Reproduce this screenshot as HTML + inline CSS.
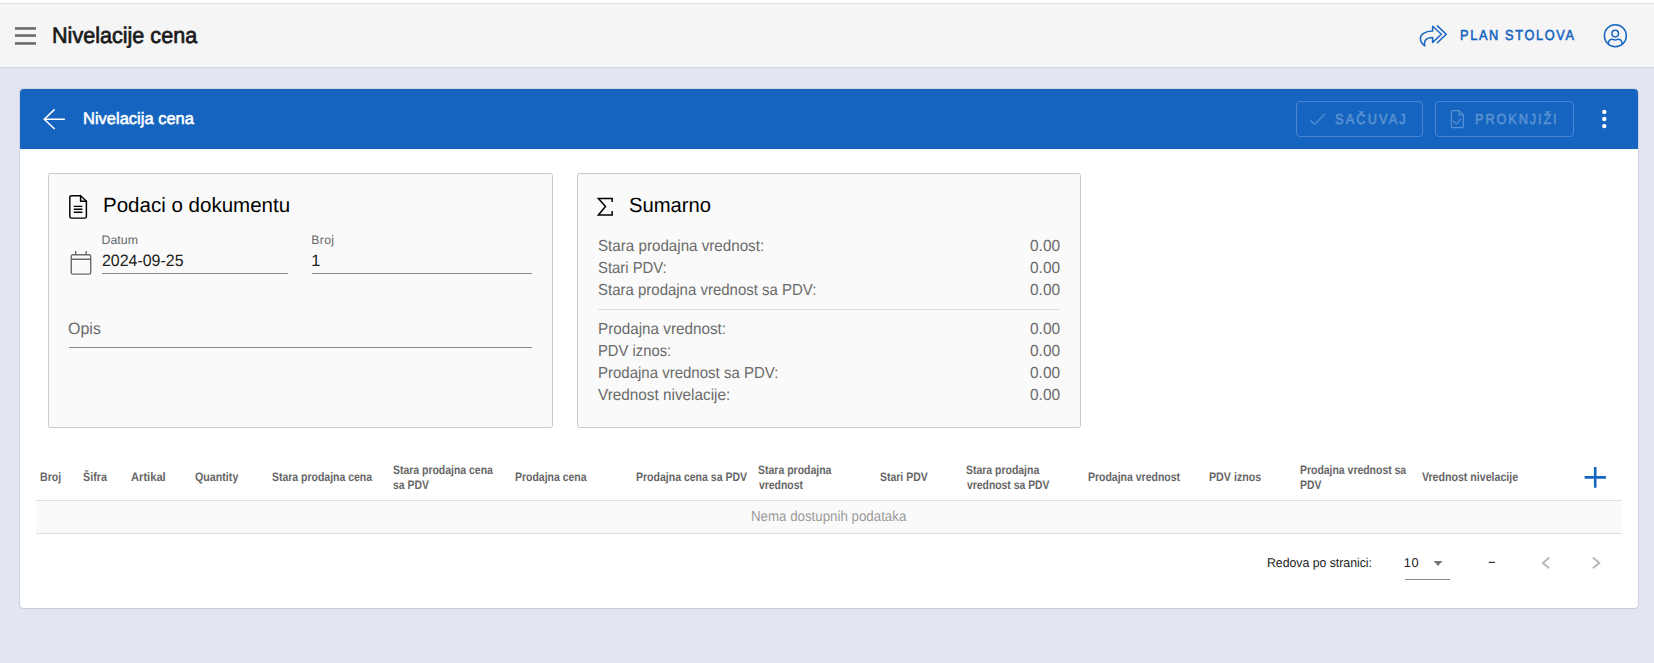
<!DOCTYPE html>
<html><head><meta charset="utf-8">
<style>
html,body{margin:0;padding:0;}
body{width:1654px;height:663px;overflow:hidden;background:#e3e6f0;position:relative;font-family:"Liberation Sans",sans-serif;}
.t{position:absolute;white-space:pre;text-rendering:geometricPrecision;transform-origin:0 0;font-family:"Liberation Sans",sans-serif;}
.abs{position:absolute;}
#top{left:0;top:0;width:1654px;height:3px;background:#fff;}
#topline{left:0;top:3px;width:1654px;height:1px;background:#e0e2e0;}
#bar{left:0;top:4px;width:1654px;height:63px;background:#f5f5f5;}
#barline{left:0;top:67px;width:1654px;height:1px;background:#d4d7e4;box-shadow:0 1px 0 #dfe2ec;}
#card{left:20px;top:89px;width:1618px;height:519px;background:#fff;border-radius:4px;box-shadow:0 0 1px 0.5px rgba(90,100,150,.14), 0 1px 1px rgba(90,100,150,.08);}
#hdr{left:20px;top:89px;width:1618px;height:60px;background:#1565c0;border-radius:4px 4px 0 0;}
.ic{left:48px;top:173px;box-sizing:border-box;height:255px;background:#fafafa;border:1px solid #c9c9c9;border-radius:2.5px;}
.btn{box-sizing:border-box;top:101px;height:36px;border:1px solid #4a86cf;border-radius:4px;}
.ul{height:1px;background:#8a8a8a;}
</style></head><body>
<div class="abs" id="top"></div><div class="abs" id="topline"></div>
<div class="abs" id="bar"></div><div class="abs" id="barline"></div>
<div class="abs" id="card"></div>
<div class="abs" id="hdr"></div>
<!-- buttons -->
<div class="abs btn" style="left:1296px;width:127px;"></div>
<div class="abs btn" style="left:1435px;width:139px;"></div>
<!-- inner cards -->
<div class="abs ic" style="left:48px;width:505px;"></div>
<div class="abs ic" style="left:577px;width:504px;"></div>
<!-- underlines -->
<div class="abs ul" style="left:102px;top:273px;width:186px;"></div>
<div class="abs ul" style="left:312px;top:273px;width:220px;"></div>
<div class="abs ul" style="left:69px;top:347px;width:463px;"></div>
<div class="abs" style="left:598px;top:309px;width:462px;height:1px;background:#dcdcdc;"></div>
<!-- table -->
<div class="abs" style="left:36px;top:500px;width:1586px;height:1px;background:#dedede;"></div>
<div class="abs" style="left:36px;top:501px;width:1586px;height:32px;background:#fafafa;"></div>
<div class="abs" style="left:36px;top:533px;width:1586px;height:1px;background:#dedede;"></div>
<div class="abs ul" style="left:1405px;top:579px;width:45px;"></div>
<svg class="abs" style="left:0;top:0;" width="1654" height="663" viewBox="0 0 1654 663" fill="none" stroke-linecap="round" stroke-linejoin="round">
<!-- hamburger -->
<g fill="#666" stroke="none"><rect x="15" y="27.2" width="21" height="2.5"/><rect x="15" y="34.3" width="21" height="2.5"/><rect x="15" y="42.2" width="21" height="2.5"/></g>
<!-- share-all -->
<g stroke="#1565c0" stroke-width="1.5" stroke-linejoin="miter">
<path d="M1441.4 34.3 L1432.6 26.2 L1432.6 31 C1424.5 31.2 1420.4 34.6 1420.4 38.2 C1420.4 41.4 1422.3 44 1424.8 45.8 C1423.6 41.2 1425.6 37.6 1432.6 37.6 L1432.6 42.4 Z" stroke-linejoin="round"/>
<path d="M1437.4 25.9 L1446.2 34.3 L1437.4 42.7"/>
</g>
<!-- user -->
<g stroke="#1565c0" stroke-width="1.5">
<circle cx="1615.35" cy="35.8" r="11"/>
<circle cx="1615.2" cy="33.6" r="3.3"/>
<path d="M1608.2 43.6 C1608.6 41.2 1610 39.3 1612 39.3 C1613.2 39.3 1613.8 40 1615.2 40 C1616.6 40 1617.2 39.3 1618.4 39.3 C1620.4 39.3 1621.8 41.2 1622.2 43.6"/>
</g>
<!-- arrow left -->
<path d="M64.9 119.2 H44.3 M54.6 109.35 L44.3 119.2 L54.6 129" stroke="#fff" stroke-width="1.5" stroke-linecap="butt" stroke-linejoin="miter"/>
<!-- check -->
<path d="M1310.3 120.2 L1314.5 124.4 L1325.3 113.6" stroke="#5b93d3" stroke-width="1.15" stroke-linecap="butt" stroke-linejoin="miter"/>
<!-- file check -->
<g stroke="#5b93d3" stroke-width="1.15">
<path d="M1459 110.6 H1452.6 Q1451.4 110.6 1451.4 111.8 V126.4 Q1451.4 127.6 1452.6 127.6 H1462.2 Q1463.4 127.6 1463.4 126.4 V114.9 Z"/>
<path d="M1459 110.6 V115 H1463.4"/>
<path d="M1453.4 121.2 L1456.3 123.8 L1461 119.2"/>
</g>
<!-- dots -->
<g fill="#fff" stroke="none"><circle cx="1604.3" cy="111.9" r="2.2"/><circle cx="1604.3" cy="119" r="2.2"/><circle cx="1604.3" cy="126.1" r="2.2"/></g>
<!-- file doc -->
<g stroke="#000" stroke-width="1.45">
<path d="M80.6 195.75 H71.4 Q69.8 195.75 69.8 197.35 V216.5 Q69.8 218.1 71.4 218.1 H84.8 Q86.4 218.1 86.4 216.5 V201.2 Z"/>
<path d="M80.6 195.75 V201.2 H86.4"/>
<path d="M73.8 206.3 H82.4 M73.8 209.25 H82.4 M73.8 212.2 H82.4" stroke-width="1.35" stroke-linecap="butt"/>
</g>
<!-- calendar -->
<g stroke="#6a6a6a" stroke-width="1.4">
<rect x="71.26" y="254.8" width="19.44" height="19.3" rx="1.6"/>
<path d="M71.26 259.2 H90.7 M75.66 251.1 V254.8 M86.2 251.1 V254.8" stroke-linecap="butt"/>
</g>
<!-- sigma -->
<path d="M612.15 202.1 V198.6 H598.4 L605.5 206.6 L598.4 214.9 H612.15 V211.1" stroke="#000" stroke-width="1.5" stroke-linecap="butt" stroke-linejoin="miter"/>
<!-- plus -->
<path d="M1584.65 477.4 H1605.9 M1595.2 467.1 V487.8" stroke="#1565c0" stroke-width="2.6" stroke-linecap="butt"/>
<!-- dropdown -->
<path d="M1433.6 561 H1442.5 L1438.05 565.9 Z" fill="#757575" stroke="none"/>
<rect x="1488.7" y="561.8" width="6.4" height="1.1" fill="#222" stroke="none"/>
<!-- chevrons -->
<g stroke="#b8b8b8" stroke-width="2" stroke-linecap="butt" stroke-linejoin="miter">
<path d="M1549.3 557.6 L1542.9 563 L1549.3 568.3"/>
<path d="M1592.9 557.6 L1599.3 563 L1592.9 568.3"/>
</g>
</svg>

<span class="t" style="left:51.78px;top:18.65px;font-size:22.5px;line-height:34px;font-weight:400;color:#1a1a1a;transform:scaleX(0.9592);-webkit-text-stroke:0.7px currentColor;">Nivelacije cena</span>
<span class="t" style="left:1459.67px;top:25.46px;font-size:14.5px;line-height:22px;font-weight:400;color:#1565c0;letter-spacing:1.865px;transform:scaleX(0.8800);-webkit-text-stroke:0.55px currentColor;">PLAN STOLOVA</span>
<span class="t" style="left:83.47px;top:106.76px;font-size:16.5px;line-height:25px;font-weight:400;color:#ffffff;transform:scaleX(0.9995);-webkit-text-stroke:0.55px currentColor;">Nivelacija cena</span>
<span class="t" style="left:1335.47px;top:108.76px;font-size:14.5px;line-height:22px;font-weight:400;color:#5a92d2;letter-spacing:2.422px;transform:scaleX(0.8800);-webkit-text-stroke:0.55px currentColor;">SAČUVAJ</span>
<span class="t" style="left:1474.97px;top:108.76px;font-size:14.5px;line-height:22px;font-weight:400;color:#5a92d2;letter-spacing:2.127px;transform:scaleX(0.8800);-webkit-text-stroke:0.55px currentColor;">PROKNJIŽI</span>
<span class="t" style="left:103.11px;top:190.02px;font-size:20.6px;line-height:31px;font-weight:400;color:#000;transform:scaleX(0.9968);">Podaci o dokumentu</span>
<span class="t" style="left:101.49px;top:230.90px;font-size:12.3px;line-height:18px;font-weight:400;color:#666666;letter-spacing:0.050px;">Datum</span>
<span class="t" style="left:101.63px;top:248.62px;font-size:16.4px;line-height:25px;font-weight:400;color:#212121;transform:scaleX(0.9723);">2024-09-25</span>
<span class="t" style="left:311.29px;top:230.90px;font-size:12.3px;line-height:18px;font-weight:400;color:#666666;letter-spacing:0.305px;">Broj</span>
<span class="t" style="left:311.24px;top:248.62px;font-size:16.4px;line-height:25px;font-weight:400;color:#212121;">1</span>
<span class="t" style="left:68.35px;top:316.92px;font-size:16.4px;line-height:25px;font-weight:400;color:#6b6b6b;transform:scaleX(0.9770);">Opis</span>
<span class="t" style="left:629.25px;top:189.52px;font-size:20.6px;line-height:31px;font-weight:400;color:#000;transform:scaleX(0.9819);">Sumarno</span>
<span class="t" style="left:597.59px;top:235.07px;font-size:16px;line-height:24px;font-weight:400;color:#6a6a6a;transform:scaleX(0.9480);">Stara prodajna vrednost:</span>
<span class="t" style="left:1030.26px;top:235.07px;font-size:16px;line-height:24px;font-weight:400;color:#6a6a6a;transform:scaleX(0.9650);">0.00</span>
<span class="t" style="left:597.61px;top:257.07px;font-size:16px;line-height:24px;font-weight:400;color:#6a6a6a;transform:scaleX(0.9278);">Stari PDV:</span>
<span class="t" style="left:1030.26px;top:257.07px;font-size:16px;line-height:24px;font-weight:400;color:#6a6a6a;transform:scaleX(0.9650);">0.00</span>
<span class="t" style="left:597.60px;top:279.07px;font-size:16px;line-height:24px;font-weight:400;color:#6a6a6a;transform:scaleX(0.9364);">Stara prodajna vrednost sa PDV:</span>
<span class="t" style="left:1030.26px;top:279.07px;font-size:16px;line-height:24px;font-weight:400;color:#6a6a6a;transform:scaleX(0.9650);">0.00</span>
<span class="t" style="left:597.71px;top:318.07px;font-size:16px;line-height:24px;font-weight:400;color:#6a6a6a;transform:scaleX(0.9536);">Prodajna vrednost:</span>
<span class="t" style="left:1030.26px;top:318.07px;font-size:16px;line-height:24px;font-weight:400;color:#6a6a6a;transform:scaleX(0.9650);">0.00</span>
<span class="t" style="left:597.75px;top:340.07px;font-size:16px;line-height:24px;font-weight:400;color:#6a6a6a;transform:scaleX(0.9243);">PDV iznos:</span>
<span class="t" style="left:1030.26px;top:340.07px;font-size:16px;line-height:24px;font-weight:400;color:#6a6a6a;transform:scaleX(0.9650);">0.00</span>
<span class="t" style="left:597.73px;top:362.07px;font-size:16px;line-height:24px;font-weight:400;color:#6a6a6a;transform:scaleX(0.9373);">Prodajna vrednost sa PDV:</span>
<span class="t" style="left:1030.26px;top:362.07px;font-size:16px;line-height:24px;font-weight:400;color:#6a6a6a;transform:scaleX(0.9650);">0.00</span>
<span class="t" style="left:597.63px;top:384.07px;font-size:16px;line-height:24px;font-weight:400;color:#6a6a6a;transform:scaleX(0.9570);">Vrednost nivelacije:</span>
<span class="t" style="left:1030.26px;top:384.07px;font-size:16px;line-height:24px;font-weight:400;color:#6a6a6a;transform:scaleX(0.9650);">0.00</span>
<span class="t" style="left:39.52px;top:468.45px;font-size:12.3px;line-height:18px;font-weight:700;color:#666666;transform:scaleX(0.8590);">Broj</span>
<span class="t" style="left:82.60px;top:468.45px;font-size:12.3px;line-height:18px;font-weight:700;color:#666666;transform:scaleX(0.8764);">Šifra</span>
<span class="t" style="left:131.12px;top:468.45px;font-size:12.3px;line-height:18px;font-weight:700;color:#666666;transform:scaleX(0.9061);">Artikal</span>
<span class="t" style="left:194.50px;top:468.45px;font-size:12.3px;line-height:18px;font-weight:700;color:#666666;transform:scaleX(0.8691);">Quantity</span>
<span class="t" style="left:271.72px;top:468.45px;font-size:12.3px;line-height:18px;font-weight:700;color:#666666;transform:scaleX(0.8513);">Stara prodajna cena</span>
<span class="t" style="left:393.42px;top:460.55px;font-size:12.3px;line-height:18px;font-weight:700;color:#666666;transform:scaleX(0.8496);">Stara prodajna cena</span>
<span class="t" style="left:393.38px;top:476.35px;font-size:12.3px;line-height:18px;font-weight:700;color:#666666;transform:scaleX(0.8467);">sa PDV</span>
<span class="t" style="left:515.23px;top:468.45px;font-size:12.3px;line-height:18px;font-weight:700;color:#666666;transform:scaleX(0.8515);">Prodajna cena</span>
<span class="t" style="left:636.42px;top:468.45px;font-size:12.3px;line-height:18px;font-weight:700;color:#666666;transform:scaleX(0.8550);">Prodajna cena sa PDV</span>
<span class="t" style="left:758.31px;top:460.55px;font-size:12.3px;line-height:18px;font-weight:700;color:#666666;transform:scaleX(0.8527);">Stara prodajna</span>
<span class="t" style="left:758.93px;top:476.35px;font-size:12.3px;line-height:18px;font-weight:700;color:#666666;transform:scaleX(0.8450);">vrednost</span>
<span class="t" style="left:880.42px;top:468.45px;font-size:12.3px;line-height:18px;font-weight:700;color:#666666;transform:scaleX(0.8511);">Stari PDV</span>
<span class="t" style="left:966.02px;top:460.55px;font-size:12.3px;line-height:18px;font-weight:700;color:#666666;transform:scaleX(0.8504);">Stara prodajna</span>
<span class="t" style="left:966.63px;top:476.35px;font-size:12.3px;line-height:18px;font-weight:700;color:#666666;transform:scaleX(0.8440);">vrednost sa PDV</span>
<span class="t" style="left:1087.62px;top:468.45px;font-size:12.3px;line-height:18px;font-weight:700;color:#666666;transform:scaleX(0.8522);">Prodajna vrednost</span>
<span class="t" style="left:1209.31px;top:468.45px;font-size:12.3px;line-height:18px;font-weight:700;color:#666666;transform:scaleX(0.8686);">PDV iznos</span>
<span class="t" style="left:1299.93px;top:460.55px;font-size:12.3px;line-height:18px;font-weight:700;color:#666666;transform:scaleX(0.8490);">Prodajna vrednost sa</span>
<span class="t" style="left:1299.93px;top:476.35px;font-size:12.3px;line-height:18px;font-weight:700;color:#666666;transform:scaleX(0.8477);">PDV</span>
<span class="t" style="left:1422.32px;top:468.45px;font-size:12.3px;line-height:18px;font-weight:700;color:#666666;transform:scaleX(0.8630);">Vrednost nivelacije</span>
<span class="t" style="left:750.71px;top:506.42px;font-size:14.4px;line-height:22px;font-weight:400;color:#9b9b9b;transform:scaleX(0.9242);">Nema dostupnih podataka</span>
<span class="t" style="left:1266.53px;top:553.08px;font-size:12.8px;line-height:19px;font-weight:400;color:#212121;transform:scaleX(0.9585);">Redova po stranici:</span>
<span class="t" style="left:1403.72px;top:553.08px;font-size:12.8px;line-height:19px;font-weight:400;color:#212121;letter-spacing:0.655px;">10</span>
</body></html>
